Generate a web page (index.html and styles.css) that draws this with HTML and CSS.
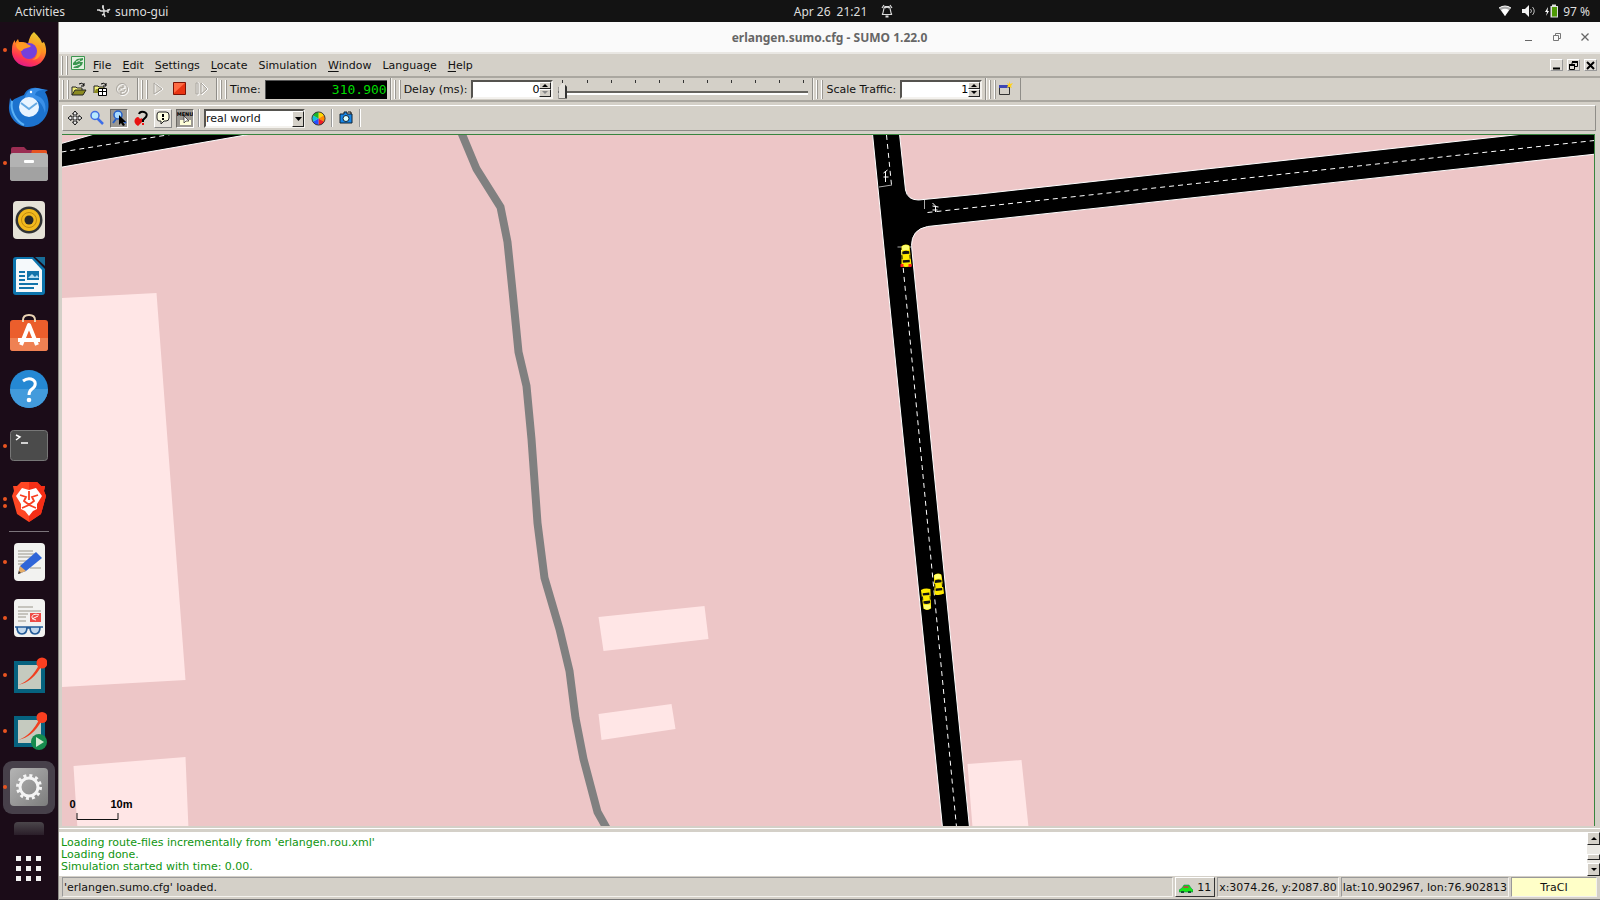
FILE: index.html
```html
<!DOCTYPE html>
<html lang="en">
<head>
<meta charset="utf-8">
<title>erlangen.sumo.cfg - SUMO 1.22.0</title>
<link rel="stylesheet" href="styles.css">
</head>
<body>
<header class="topbar">
  <div class="top-left">
    <button class="top-btn">Activities</button>
    <button class="top-btn app-name"><svg width="14" height="14" viewBox="0 0 14 14" fill="none" stroke="#ddd" stroke-width="1.400"><path d="M6 1v3l1 2v4l-2 1M7 7l2 0h2l2-2M7 7H4L2 6M0 6h3M5 3h2M7 10l1 3M11 5v4"/></svg>sumo-gui</button>
  </div>
  <button class="top-btn clock"><span>Apr 26</span><span>21:21</span><svg width="12" height="14" viewBox="0 0 12 14" fill="none" stroke="#ddd" stroke-width="1.200"><path d="M1 10.500c2-1 1-7 3-8h4c2 1 1 7 3 8zM4 4c1-1 3-1 4 0M1 4l2-3M11 4L9 1"/><path d="M4.500 12.500h3" stroke-width="2"/></svg></button>
  <button class="top-btn tray" aria-label="System menu">
    <svg width="14" height="12" viewBox="0 0 14 12"><path d="M1 3Q7-1 13 3L7 11z" fill="#aaa"/><path d="M3 5Q7 2.500 11 5L7 11z" fill="#fff"/><path d="M1 3Q7-1 13 3" fill="none" stroke="#fff"/></svg>
    <svg width="13" height="12" viewBox="0 0 13 12"><path d="M0 4h3l4-4v12L3 8H0z" fill="#f2f2f2"/><path d="M8.500 4q2 2 0 4M10.500 2q3.500 4 0 8" fill="none" stroke="#bbb"/></svg>
    <span class="battery"><svg width="14" height="14" viewBox="0 0 14 14"><path d="M3 3L0 8h2l-1 4 3-5H2.500z" fill="#fff"/><path d="M7 .5h4v1.500h2v11.500H5.500V2H7z" fill="#ddd"/><path d="M7 3h5v9.500H7z" fill="#4e9a06"/></svg>97 %</span>
  </button>
</header>
<div class="desktop">
<nav class="dock" aria-label="Dock">
  <button class="dock-item" aria-label="Firefox"><i class="dots"></i><svg width="38" height="38" viewBox="0 0 38 38"><defs><linearGradient id="ff" x1=".8" y1="0" x2=".4" y2="1"><stop offset="0" stop-color="#e3d535"/><stop offset=".45" stop-color="#ff9220"/><stop offset=".8" stop-color="#ff3651"/><stop offset="1" stop-color="#e21d86"/></linearGradient></defs><path d="M24 1c3 3 7 7 8 11l2-1c3 6 3 13-1 18-4 6-12 8-19 6C6 33 1 26 2 18c0-4 1-7 3-9v3l3-4 1 3c3 0 7 0 9 2 1-4 2-9 6-12z" fill="url(#ff)"/><circle cx="19" cy="20" r="8" fill="#7440dc"/><path d="M6 13c4-2 8-2 11 0l4 2c-3 3-7 1-9 5-3 0-6-3-6-7zM25 14c4 4 3 13-3 15 9 0 11-9 7-15z" fill="#ff9a22"/></svg></button>
  <button class="dock-item" aria-label="Thunderbird"><svg width="42" height="42" viewBox="0 0 42 42"><path d="M2 12l2 3c3-3 7-4 12-6 2-5 7-8 13-7l11 2-3 2c4 6 5 17 1 24-4 7-10 11-18 11C9 41 0 31 1 20z" fill="#1c72ce"/><path d="M17 12c1-6 6-10 12-10l8 2c-6 0-9 1-10 5 8 2 12 8 10 18-2-10-9-17-20-15z" fill="#3a8fe8"/><circle cx="21" cy="21" r="10" fill="#e9f4ff"/><path d="M13 17l8 6 8-6" fill="none" stroke="#65a9e3" stroke-width="2"/><circle cx="23" cy="6" r="1.200" fill="#fff"/><path d="M4 15c-2 10 4 20 12 24" stroke="#5ab1f6" stroke-width="2" fill="none"/></svg></button>
  <button class="dock-item" aria-label="Files"><i class="dots"></i><svg width="38" height="35" viewBox="0 0 38 35"><path d="M1 3q0-2 2-2h11l3 3h18q2 0 2 2v9H1z" fill="#9b2d52"/><path d="M22 4h13q2 0 2 2v6H20z" fill="#e65322"/><rect y="7" width="38" height="28" rx="3" fill="#b3b3b3"/><path d="M0 21h38v11q0 3-3 3H3q-3 0-3-3z" fill="#a2a2a2"/><rect x="14" y="14" width="10" height="3" rx="1" fill="#fff"/></svg></button>
  <button class="dock-item" aria-label="Rhythmbox"><svg width="32" height="38" viewBox="0 0 32 38"><rect width="32" height="38" rx="4" fill="#e6e2d7"/><circle cx="16" cy="19" r="13.500" fill="#303234"/><circle cx="16" cy="19" r="11" fill="#f1b91e"/><circle cx="16" cy="19" r="7.500" fill="none" stroke="#c28a0d"/><circle cx="16" cy="19" r="4.500" fill="#25272a"/></svg></button>
  <button class="dock-item" aria-label="Writer"><svg width="32" height="38" viewBox="0 0 32 38"><path d="M3 0h17l12 12v23q0 3-3 3H3q-3 0-3-3V3q0-3 3-3z" fill="#0d75ad"/><path d="M4 2h15l10 11v22H3V3z" fill="#f5f9fb"/><path d="M22 0h10v9z" fill="#186d98"/><path d="M6 15h6M6 19h6M6 23h6M6 27h19M6 31h15" stroke="#1274aa" stroke-width="2"/><path d="M14 14h12v9H14z" fill="#1274aa"/><path d="M15 21l4-4 3 3 2-2 2 3z" fill="#b3dcf1"/></svg></button>
  <button class="dock-item" aria-label="Software"><svg width="38" height="37" viewBox="0 0 38 37"><rect y="6" width="38" height="31" rx="3" fill="#eb5e2c"/><path d="M0 24h38v10q0 3-3 3H3q-3 0-3-3z" fill="#ef8153"/><path d="M13 8V6q0-5 6-5t6 5v2" fill="none" stroke="#ead4b4" stroke-width="2"/><path d="M11 31l8-20 8 20M8 26h22" fill="none" stroke="#fff" stroke-width="4" stroke-linejoin="round"/></svg></button>
  <button class="dock-item" aria-label="Help"><svg width="38" height="38" viewBox="0 0 38 38"><circle cx="19" cy="19" r="19" fill="#2588d3"/><path d="M0 19a19 19 0 0038 0z" fill="#429bdc"/><path d="M13 11q4-3 8-2c6 2 5 7 1 10q-3 2-3 6" fill="none" stroke="#fff" stroke-width="3"/><circle cx="19" cy="30" r="2.300" fill="#fff"/></svg></button>
  <button class="dock-item" aria-label="Terminal"><i class="dots"></i><svg width="38" height="31" viewBox="0 0 38 31"><rect x=".5" y=".5" width="37" height="30" rx="3" fill="#4b4b4b" stroke="#777"/><path d="M6 5l4 2-4 3M11 13h7" fill="none" stroke="#fff" stroke-width="1.500"/></svg></button>
  <button class="dock-item" aria-label="Brave"><i class="dots two"></i><svg width="34" height="40" viewBox="0 0 34 40"><path d="M9 0h16l4 4 4 0-1 5 2 5-5 18-12 8L5 32 0 14l2-5-1-5h4z" fill="#ff4724"/><path d="M17 0h8l4 4h4l-1 5 2 5-5 18-12 8z" fill="#f52e16"/><path d="M10 6l7 2 7-2 6 8-5 8v5l-4 2-4 5-4-5-4-2v-5L4 14z" fill="#fff"/><path d="M8 13l6 2-2 4 4 3h2l4-3-2-4 6-2M17 9v9M10 26l7-3 7 3" fill="none" stroke="#f94022" stroke-width="1.800"/></svg></button>
  <hr class="dock-sep">
  <button class="dock-item" aria-label="Text editor"><i class="dots"></i><svg width="31" height="38" viewBox="0 0 31 38"><rect width="31" height="38" rx="4" fill="#f2f2f0"/><path d="M4 8h15M4 11h18M4 14h13M4 18h10M4 21h8M16 25h11" stroke="#b8b5ac" stroke-width="1.300"/><path d="M4 31l2-8L22 9l6 6-16 13z" fill="#2f65d8"/><path d="M4 31l2-8 6 5z" fill="#e6ad67"/><path d="M4 31l1-3 2 2z" fill="#333"/></svg></button>
  <button class="dock-item" aria-label="Document viewer"><i class="dots"></i><svg width="31" height="38" viewBox="0 0 31 38"><rect width="31" height="38" rx="4" fill="#f2f2f0"/><path d="M4 8h15M4 12h23M4 15h10M4 18h8M4 22h8" stroke="#b8b5ac" stroke-width="1.300"/><path d="M16 14h11v9H16z" fill="#ee4b45"/><path d="M25 16c-7-3-10 4-3 5M18 20l6-3" fill="none" stroke="#fff"/><path d="M3 28h10q0 7-5 7-5 0-5-7zM16 28h10q0 7-5 7-5 0-5-7zM13 29h4M1 28h28" fill="#c3d8ec" stroke="#235b98" stroke-width="1.700"/></svg></button>
  <button class="dock-item" aria-label="XDG plot"><i class="dots"></i><svg width="36" height="36" viewBox="0 0 36 36"><path d="M3 4h31v32H3z" fill="#06627f"/><path d="M7 8h23v24H7z" fill="#c5cabf"/><path d="M7 28Q20 24 29 6l2 2Q22 25 7 28z" fill="#f04021"/><circle cx="31" cy="6" r="5.500" fill="#fa3f20"/></svg></button>
  <button class="dock-item" aria-label="Plot runner"><i class="dots"></i><svg width="36" height="38" viewBox="0 0 36 38"><path d="M3 4h31v31H3z" fill="#06627f"/><path d="M7 8h23v23H7z" fill="#c5cabf"/><path d="M7 28Q20 24 29 6l2 2Q22 25 7 28z" fill="#f04021"/><circle cx="31" cy="5.500" r="5.500" fill="#fa3f20"/><circle cx="28" cy="30" r="8" fill="#168b4d"/><path d="M25 25l8 5-8 5z" fill="#d4e8d0"/></svg></button>
  <button class="dock-item active" aria-label="sumo-gui"><i class="dots"></i><svg width="38" height="38" viewBox="0 0 38 38"><defs><linearGradient id="gear" x2="1" y2="1"><stop offset="0" stop-color="#b4b4b4"/><stop offset="1" stop-color="#7d7d7d"/></linearGradient></defs><rect width="38" height="38" rx="4" fill="url(#gear)"/><circle cx="19" cy="19" r="9" fill="none" stroke="#f4f4f4" stroke-width="3"/><circle cx="19" cy="19" r="11.500" fill="none" stroke="#f4f4f4" stroke-width="3" stroke-dasharray="3 3.020"/></svg></button>
  <span class="dock-peek"></span>
  <button class="dock-item" aria-label="Show applications"><svg width="26" height="26" viewBox="0 0 26 26" fill="#f2f2f2"><path d="M0 0h5v5H0zM10 0h5v5h-5zM20 0h5v5h-5zM0 10h5v5H0zM10 10h5v5h-5zM20 10h5v5h-5zM0 20h5v5H0zM10 20h5v5h-5zM20 20h5v5h-5z"/></svg></button>
</nav>
<main class="window">
  <header class="titlebar">
    <h1 class="title">erlangen.sumo.cfg - SUMO 1.22.0</h1>
    <div class="win-buttons">
      <button class="win-btn" aria-label="Minimize"><svg width="8" height="9" viewBox="0 0 8 9"><path d="M0 7.500h7" stroke="#666"/></svg></button>
      <button class="win-btn" aria-label="Restore"><svg width="8" height="8" viewBox="0 0 8 8" fill="none" stroke="#777"><path d="M.5 2.500h5v5h-5zM2.500 2V.5h5v5H6"/></svg></button>
      <button class="win-btn" aria-label="Close"><svg width="8" height="8" viewBox="0 0 8 8"><path d="M.5.5l7 7M7.500.5l-7 7" stroke="#666" stroke-width="1.300"/></svg></button>
    </div>
  </header>
  <nav class="menubar" aria-label="Menu">
    <i class="grip"></i>
    <svg class="doc-icon" width="14" height="14" viewBox="0 0 14 14"><path d="M.5.5h13v13H.5z" fill="#e4f0e0" stroke="#3c9650"/><path d="M2 7l4-4 6-1v2L8 6l4 0-1 3-4 3H2l3-3H2z" fill="#3c9650"/><path d="M5 6l4-2M4 10l5-2" stroke="#e4f0e0"/></svg>
    <button class="menu"><u>F</u>ile</button><button class="menu"><u>E</u>dit</button><button class="menu"><u>S</u>ettings</button><button class="menu"><u>L</u>ocate</button><button class="menu">Simulation</button><button class="menu"><u>W</u>indow</button><button class="menu">Langua<u>g</u>e</button><button class="menu"><u>H</u>elp</button>
    <div class="mdi">
      <button class="mdi-btn" aria-label="Minimize view"><svg width="9" height="9" viewBox="0 0 9 9"><path d="M1 7.500h7" stroke="#000" stroke-width="2"/></svg></button>
      <button class="mdi-btn" aria-label="Restore view"><svg width="9" height="9" viewBox="0 0 9 9" fill="none" stroke="#000"><path d="M.5 4.500h5v4h-5zM3 4V1.500h5.500v4H6"/><path d="M0 4h6M3 1h6" stroke-width="2"/></svg></button>
      <button class="mdi-btn" aria-label="Close view"><svg width="9" height="9" viewBox="0 0 9 9"><path d="M1 1l7 7M8 1L1 8" stroke="#000" stroke-width="2"/></svg></button>
    </div>
  </nav>
  <div class="toolbar">
    <div class="group"><i class="grip"></i>
      <button class="tool" aria-label="Open simulation"><svg width="16" height="16" viewBox="0 0 16 16"><path d="M1 14V6h4l1 1h5v2" fill="#f2ef7a" stroke="#222"/><path d="M1 14l3-5h11l-3 5z" fill="#8b8a20" stroke="#222"/><path d="M8 3q3-2 5 1m0-2v3h-3" fill="none" stroke="#000"/></svg></button>
      <button class="tool" aria-label="Open network"><svg width="16" height="16" viewBox="0 0 16 16"><path d="M1 12V5h4l1 1h5v3" fill="#f2ef7a" stroke="#222"/><path d="M1 12l2-4h8v4z" fill="#8b8a20"/><path d="M5.500 7.500h8v7h-8zM9.500 7v8M5 10.500h9" fill="#fff" stroke="#000"/><path d="M8 3q3-2 5 1m0-2v3h-3" fill="none" stroke="#000"/></svg></button>
      <button class="tool" aria-label="Reload" disabled><svg width="16" height="16" viewBox="0 0 16 16" fill="none"><g stroke="#fff" transform="translate(1 1)"><circle cx="7" cy="8" r="5.500"/><path d="M5 9a2.500 2.500 0 014-2V4M10 8a2.500 2.500 0 01-4 2v3"/></g><g stroke="#aaa69f"><circle cx="7" cy="8" r="5.500"/><path d="M4 9a2.500 2.500 0 014-2V4M10 8a2.500 2.500 0 01-4 2v3"/></g></svg></button>
    </div>
    <div class="group"><i class="grip"></i>
      <button class="tool" aria-label="Run" disabled><svg width="16" height="16" viewBox="0 0 16 16" fill="none"><path d="M5 14V2l8 6z" stroke="#fff"/><path d="M4 13V2l8 6z" stroke="#aaa69f"/></svg></button>
      <button class="tool" aria-label="Stop"><svg width="14" height="14" viewBox="0 0 14 14"><path d="M.5.5h12v12H.5z" fill="#e93412" stroke="#7c1205"/><path d="M1 1h11L1 11z" fill="#ff6b43"/></svg></button>
      <button class="tool" aria-label="Step" disabled><svg width="16" height="16" viewBox="0 0 16 16" fill="none"><path d="M3 2v12h2V2zM8 14V2l6 6z" stroke="#fff"/><path d="M2 2v11h2V2zM7 13V2l6 6z" stroke="#aaa69f"/></svg></button>
    </div>
    <div class="group"><i class="grip"></i><span class="label">Time:</span><output class="lcd" aria-label="Simulation time">310.900</output></div>
    <div class="group"><i class="grip"></i><label class="label" for="delay">Delay (ms):</label>
      <span class="spin"><input id="delay" type="text" value="0"><span class="arrows"><button aria-label="Increase delay"><svg width="6" height="3" viewBox="0 0 6 3"><path d="M0 3l3-3 3 3z"/></svg></button><button aria-label="Decrease delay"><svg width="6" height="3" viewBox="0 0 6 3" fill="#888"><path d="M0 0l3 3 3-3z"/></svg></button></span></span>
      <span class="slide"><span class="ticks"><i></i><i></i><i></i><i></i><i></i><i></i><i></i><i></i><i></i><i></i><i></i></span><input type="range" min="0" max="1000" value="0" aria-label="Delay"></span>
    </div>
    <div class="group"><i class="grip"></i><label class="label" for="scale">Scale Traffic:</label>
      <span class="spin"><input id="scale" type="text" value="1"><span class="arrows"><button aria-label="Increase scale"><svg width="6" height="3" viewBox="0 0 6 3"><path d="M0 3l3-3 3 3z"/></svg></button><button aria-label="Decrease scale"><svg width="6" height="3" viewBox="0 0 6 3"><path d="M0 0l3 3 3-3z"/></svg></button></span></span>
    </div>
    <div class="group"><i class="grip"></i><button class="tool" aria-label="New view"><svg width="16" height="16" viewBox="0 0 16 16"><path d="M1.500 4.500h10v9h-10z" fill="#d4d0c8" stroke="#333"/><path d="M1 4h10v3H1z" fill="#3d46b4"/><path d="M11 0l1 3 3-1-2 3 1 2-3-1-2 1 1-3-1-2 2 1z" fill="#ffd21c"/></svg></button></div>
  </div>
  <div class="viewbar">
    <button class="vtool" aria-label="Recenter"><svg width="16" height="16" viewBox="0 0 16 16" fill="#eee" stroke="#111"><path d="M8 1l2.500 3H9v3h3V5.500L15 8l-3 2.500V9H9v3h1.500L8 15l-2.500-3H7V9H4v1.500L1 8l3-2.500V7h3V4H5.500z"/></svg></button>
    <button class="vtool" aria-label="Zoom"><svg width="16" height="16" viewBox="0 0 16 16"><path d="M8 8l6 6" stroke="#3d6ee8" stroke-width="2.500"/><circle cx="6" cy="5.500" r="4" fill="#b9eaff" stroke="#426ee0" stroke-width="1.500"/></svg></button>
    <button class="vtool pressed" aria-label="Zoom style"><svg width="16" height="16" viewBox="0 0 16 16"><circle cx="7" cy="5" r="4" fill="#a9dcff" stroke="#245fc8" stroke-width="1.500"/><path d="M2 13l3-4M9 8l6 5" stroke="#245fc8" stroke-width="2"/><path d="M8 5v10l2-2 2 3 2-1-2-3h3z" fill="#000"/></svg></button>
    <button class="vtool" aria-label="Locate"><svg width="16" height="16" viewBox="0 0 16 16"><path d="M2 9q3-4 5 0 3-2 3 2l-5 5q-5-3-3-7z" fill="#e81212"/><path d="M6 4q1-3 5-2t2 5l-3 3v2" fill="none" stroke="#000" stroke-width="2"/><path d="M10 13v2" stroke="#e11" stroke-width="2"/></svg></button>
    <button class="vtool raised" aria-label="Tooltips"><svg width="14" height="14" viewBox="0 0 14 14"><path d="M3 1h7q3 0 3 3v3q0 3-3 3H8l-3 3V10H3Q1 10 1 7V4q0-3 2-3z" fill="#ffffe1" stroke="#222"/><path d="M7 3v3M7 7v2" stroke="#000" stroke-width="2"/></svg></button>
    <button class="vtool pressed" aria-label="Menu popup"><svg width="16" height="16" viewBox="0 0 16 16"><text class="tiny" x="8" y="6" text-anchor="middle">MENU</text><path d="M3 10h11v5H3z" fill="#ffffd8"/><path d="M7 6v7l2-2h3z" fill="#fff" stroke="#222" stroke-width=".7"/></svg></button>
    <i class="vsep"></i>
    <span class="combo"><select aria-label="Coloring scheme"><option>real world</option></select><span class="combo-arrow"><svg width="7" height="4" viewBox="0 0 7 4"><path d="M0 0h7L3.500 4z"/></svg></span></span>
    <button class="vtool" aria-label="Edit coloring"><svg width="15" height="15" viewBox="0 0 16 16"><path d="M8 8V1a7 7 0 016 3.500z" fill="#ffd800"/><path d="M8 8l6-3.500a7 7 0 010 7z" fill="#ff8a00"/><path d="M8 8l6 3.500A7 7 0 018 15z" fill="#f01f24"/><path d="M8 8v7a7 7 0 01-6-3.500z" fill="#254cff"/><path d="M8 8l-6 3.500a7 7 0 010-7z" fill="#11bfdc"/><path d="M8 8L2 4.500A7 7 0 018 1z" fill="#19b629"/><circle cx="8" cy="8" r="7" fill="none" stroke="#333"/></svg></button>
    <i class="vsep"></i>
    <button class="vtool" aria-label="Snapshot"><svg width="14" height="14" viewBox="0 0 14 14"><path d="M1 3h4V1h3v2h5v9H1z" fill="#1686e8" stroke="#123"/><circle cx="7" cy="7.500" r="3" fill="#dff" stroke="#123"/><path d="M9 1h3v2" stroke="#111" fill="none"/></svg></button>
    <i class="vsep"></i>
  </div>
  <section class="canvas" aria-label="Network view">
    <svg class="map" viewBox="62 135 1533 691" preserveAspectRatio="xMidYMid slice">
      <path class="land" d="M0 0h1700v900H0z"/>
      <g class="building"><path d="M62 298l95-5 29 387-124 7zM599 617l106-11 4 33-105 12zM599 714l73-10 4 25-74 11zM74 766l112-9 3 72H78zM968 764l54-4 7 67h-56z"/></g>
      <path class="river" d="M462 133l15 36 24 38 7 35 5 49 6 61 8 34 5 53 6 84 7 55 15 51 10 42 6 47 8 41 14 53 9 16"/>
      <g class="road">
        <path d="M60 144l35-10h157L60 167.500z"/>
        <path d="M873 134l27 0 6 56q2 10 13 10l61-6 544-60h73v20L928 226.500q-16 3-16 19l58 582h-27z"/>
      </g>
      <g class="lane"><path d="M62 152l112-18"/><path d="M887 135l5 50M902 250l55 577M928 212.500l667-72"/></g>
      <g class="stop"><path d="M879.500 187l13-2M898 247h14M925 200v9"/></g>
      <path d="M886 182v-10m-2 5h5m-5-4l4-3M933 203l3 3v6m-3-6l6 1m-6 3h5" fill="none" stroke="#fff"/>
      <defs><g id="car"><path d="M-4-10Q0-13 4-10L5 10Q0 12-5 10z" fill="#ffea00"/><path d="M-3.500-10Q0-12 3.500-10V-6h-7z" fill="#ffff70"/><path d="M-3.500-4.500Q0-6 3.500-4.500V-2h-7zM-3.500 4h7V6.500h-7zM-4.500-1h1v4h-1zM3.500-1h1v4h-1z" fill="#111"/></g></defs>
      <use href="#car" transform="translate(906.500 256) rotate(-3)"/><path d="M901 264h3v3h-3zM909 264h3v3h-3z" fill="#f22"/>
      <use href="#car" transform="translate(939 584.500) rotate(-5) scale(.95)"/>
      <use href="#car" transform="translate(927 599) rotate(175) scale(.95)"/>
      <g class="scale"><text x="70" y="808">0</text><text x="111" y="808">10m</text><path d="M77.500 813v6.500h41V813"/></g>
    </svg>
  </section>
  <section class="log" aria-label="Messages">
    <div class="log-text"><p>Loading route-files incrementally from 'erlangen.rou.xml'</p><p>Loading done.</p><p>Simulation started with time: 0.00.</p></div>
    <div class="scroll"><button aria-label="Scroll up"><svg width="6" height="3" viewBox="0 0 6 3"><path d="M0 3l3-3 3 3z"/></svg></button><span class="scroll-track"><i></i></span><button aria-label="Scroll down"><svg width="6" height="3" viewBox="0 0 6 3"><path d="M0 0l3 3 3-3z"/></svg></button></div>
  </section>
  <footer class="status">
    <span class="cell message">'erlangen.sumo.cfg' loaded.</span>
    <button class="vehicles"><svg width="14" height="12" viewBox="0 0 14 12"><path d="M0 9l3-2 2-3h5l2 3 2 2v2H0z" fill="#19e819" stroke="#075" stroke-width=".5"/><path d="M5 5h4l1 2H4z" fill="#a54"/><path d="M2 10h3v2H2zM9 10h3v2H9z" fill="#153"/></svg>11</button>
    <span class="cell">x:3074.26, y:2087.80</span>
    <span class="cell">lat:10.902967, lon:76.902813</span>
    <span class="cell traci">TraCI</span>
  </footer>
</main>
</div>
</body>
</html>
```
FILE: styles.css
```css
* { box-sizing: border-box; }
body { margin: 0; height: 100vh; display: flex; flex-direction: column; overflow: hidden; background: #1b0c18; font: 11px "DejaVu Sans", sans-serif; color: #111; }
button { margin: 0; padding: 0; border: 0; background: none; font: inherit; color: inherit; }
svg { display: block; flex: none; }

.topbar { flex: none; height: 22px; display: grid; grid-template-columns: 1fr auto 1fr; align-items: center; padding: 0 10px 0 15px; background: #131313; color: #dedede; font: 12px "Noto Sans", sans-serif; }
.top-left { display: flex; gap: 32px; }
.top-btn { display: flex; align-items: center; }
.app-name { gap: 4px; }
.clock { gap: 6px; margin-left: 82px; }
.clock svg { margin-left: 8px; }
.tray { justify-self: end; gap: 10px; }
.battery { display: flex; align-items: center; gap: 4px; }

.desktop { flex: 1; min-height: 0; display: flex; }
.dock { flex: none; width: 58px; padding-bottom: 3px; display: grid; grid-template-rows: repeat(9, 57fr) 3fr repeat(5, 57fr) 25fr 57fr; background: #1b0c18; }
.dock-item { position: relative; display: grid; place-items: center; min-height: 0; }
.dock-item.active::before { content: ""; position: absolute; inset: 2px 3px; border-radius: 9px; background: #47404a; }
.dock-item svg { position: relative; }
.dots { position: absolute; left: 3px; top: 50%; width: 4px; height: 4px; margin-top: -2px; border-radius: 50%; background: #e95420; }
.dots.two { box-shadow: 0 7px #e95420; margin-top: -5px; }
.dock-sep { align-self: center; width: 40px; height: 1px; margin: 0 auto; border: 0; background: #7c747b; }
.dock-peek { align-self: center; justify-self: center; width: 30px; height: 13px; border-radius: 4px 4px 0 0; background: linear-gradient(#4b464b, #2a1e29); }

.window { flex: 1; min-width: 0; display: flex; flex-direction: column; background: #d4d0c8; border-left: 1px solid #8f8d88; }
.titlebar { flex: none; height: 32px; display: grid; grid-template-columns: 1fr auto 1fr; align-items: center; padding: 0 11px; background: #fafafa; border-bottom: 2px solid #e9e7e3; color: #666; }
.title { grid-column: 2; margin: 0; font: bold 12px "Noto Sans", sans-serif; }
.win-buttons { justify-self: end; display: flex; gap: 20px; }
.menubar { flex: none; height: 24px; display: flex; align-items: center; gap: 11px; padding: 0 3px 0 2px; border-bottom: 2px solid #aaa7a0; }
.grip { flex: none; width: 6px; height: 19px; border: solid #fff; border-width: 0 1px; box-shadow: 1px 0 #9b9892, inset -2px 0 #d4d0c8, inset 1px 0 #9b9892; }
.doc-icon { margin: -4px -3px 0 -7px; }
.menubar u { text-underline-offset: 2px; }
.mdi { margin-left: auto; display: flex; gap: 4px; }
.mdi-btn { display: grid; place-items: center; width: 13px; height: 12px; background: #dedbd5; border: 1px solid; border-color: #fff #999 #999 #fff; }
.toolbar { flex: none; height: 24px; display: flex; border-bottom: 2px solid #aaa7a0; }
.group { display: flex; align-items: center; padding: 0 3px 0 2px; border-right: 1px solid #8f8d88; border-left: 1px solid #f4f2ee; }
.tool { display: grid; place-items: center; width: 22px; height: 20px; }
.label { margin: 0 4px; white-space: nowrap; }
.lcd { width: 122px; height: 19px; background: #000; color: #0d0; text-align: right; font: 13px/17px "DejaVu Sans Mono", monospace; border: 1px solid #555; border-width: 1px 0 0 1px; }
.spin { display: flex; width: 82px; height: 19px; background: #fff; border: 2px solid; border-color: #55534f #f4f2ee #f4f2ee #55534f; }
.spin input { flex: 1; min-width: 0; padding: 0; border: 0; background: #fff; font: 11px "DejaVu Sans", sans-serif; text-align: right; outline: 0; }
.arrows { flex: none; display: grid; grid-template-rows: 1fr 1fr; width: 12px; }
.arrows button, .scroll button, .combo-arrow { display: grid; place-items: center; background: #d4d0c8; border: 1px solid; border-color: #fff #222 #222 #fff; }
.slide { display: flex; flex-direction: column; width: 250px; margin: 0 1px 0 5px; }
.ticks { display: flex; justify-content: space-between; padding: 0 4px; height: 3px; }
.ticks i { width: 1px; height: 3px; background: #333; }
.slide input { appearance: none; width: 100%; height: 16px; margin: 0; background: linear-gradient(#66645f 0 2px, #fff 2px 4px) 0 8px / 100% 4px no-repeat; }
.slide input::-webkit-slider-thumb { appearance: none; width: 9px; height: 16px; background: linear-gradient(90deg, #777 1px, #e4e1db 1px 7px, #333 7px); border-bottom: 1px solid #222; clip-path: polygon(50% 0, 100% 30%, 100% 100%, 0 100%, 0 30%); }

.viewbar { flex: none; height: 26px; display: flex; align-items: center; gap: 4px; margin: 3px 4px 0 3px; padding: 0 3px; border: 1px solid; border-color: #fff #8f8d88 #8f8d88 #fff; }
.vtool { display: grid; place-items: center; width: 18px; height: 19px; border: 1px solid transparent; }
.pressed { background: #9b9892; border-color: #6b6965 #fff #fff #6b6965; }
.raised { background: #e4e1db; border-color: #fff #888 #888 #fff; }
.tiny { font: bold 5px "DejaVu Sans", sans-serif; }
.vsep { width: 2px; height: 18px; border-left: 1px solid #999; border-right: 1px solid #fff; }
.combo { position: relative; width: 101px; height: 19px; }
.combo select { appearance: none; width: 100%; height: 100%; padding: 0; border: 2px solid; border-color: #55534f #f4f2ee #f4f2ee #55534f; border-radius: 0; background: #fff; color: #111; font: 11px "DejaVu Sans", sans-serif; }
.combo-arrow { position: absolute; right: 1px; top: 2px; bottom: 1px; width: 12px; pointer-events: none; }

.canvas { flex: 1; min-height: 0; margin: 3px 5px 0 3px; border: solid #38843e; border-width: 1px 1px 0 0; }
.map { width: 100%; height: 100%; }
.land { fill: #edc6c7; }
.building { fill: #ffe6e6; }
.river { fill: none; stroke: #808080; stroke-width: 8; }
.road { fill: #000; stroke: #fff; stroke-width: 1; }
.lane { fill: none; stroke: #fff; stroke-width: 1; stroke-dasharray: 5 4; }
.stop { fill: none; stroke: #aaa; stroke-width: 1; }
.scale { font: bold 11px "Liberation Sans", sans-serif; }
.scale path { fill: none; stroke: #111; }

.log { flex: none; height: 47px; margin-top: 3px; display: flex; background: #fff; border-top: 3px solid #d4d0c8; box-shadow: 0 -1px #fff; }
.log-text { flex: 1; display: flex; flex-direction: column; justify-content: flex-end; padding: 0 2px 3px; color: #109510; line-height: 12px; }
.log p { margin: 0; }
.scroll { width: 13px; display: flex; flex-direction: column; }
.scroll button { height: 13px; }
.scroll-track { flex: 1; display: flex; align-items: flex-end; background: #ebe9e4; padding-bottom: 3px; }
.scroll-track i { width: 100%; height: 6px; background: #d4d0c8; border: 1px solid; border-color: #fff #222 #222 #fff; }
.status { flex: none; height: 24px; display: flex; align-items: stretch; gap: 2px; padding: 1px 3px 2px; border-bottom: 1px solid #777; }
.cell { display: flex; align-items: center; padding: 0 1px; border: 1px solid; border-color: #999 #f4f2ee #f4f2ee #999; white-space: nowrap; }
.message { flex: 1; }
.vehicles { display: flex; align-items: center; gap: 4px; padding: 0 3px; border: 1px solid; border-color: #fff #333 #333 #fff; }
.traci { width: 86px; justify-content: center; background: #ffffc8; }
```
